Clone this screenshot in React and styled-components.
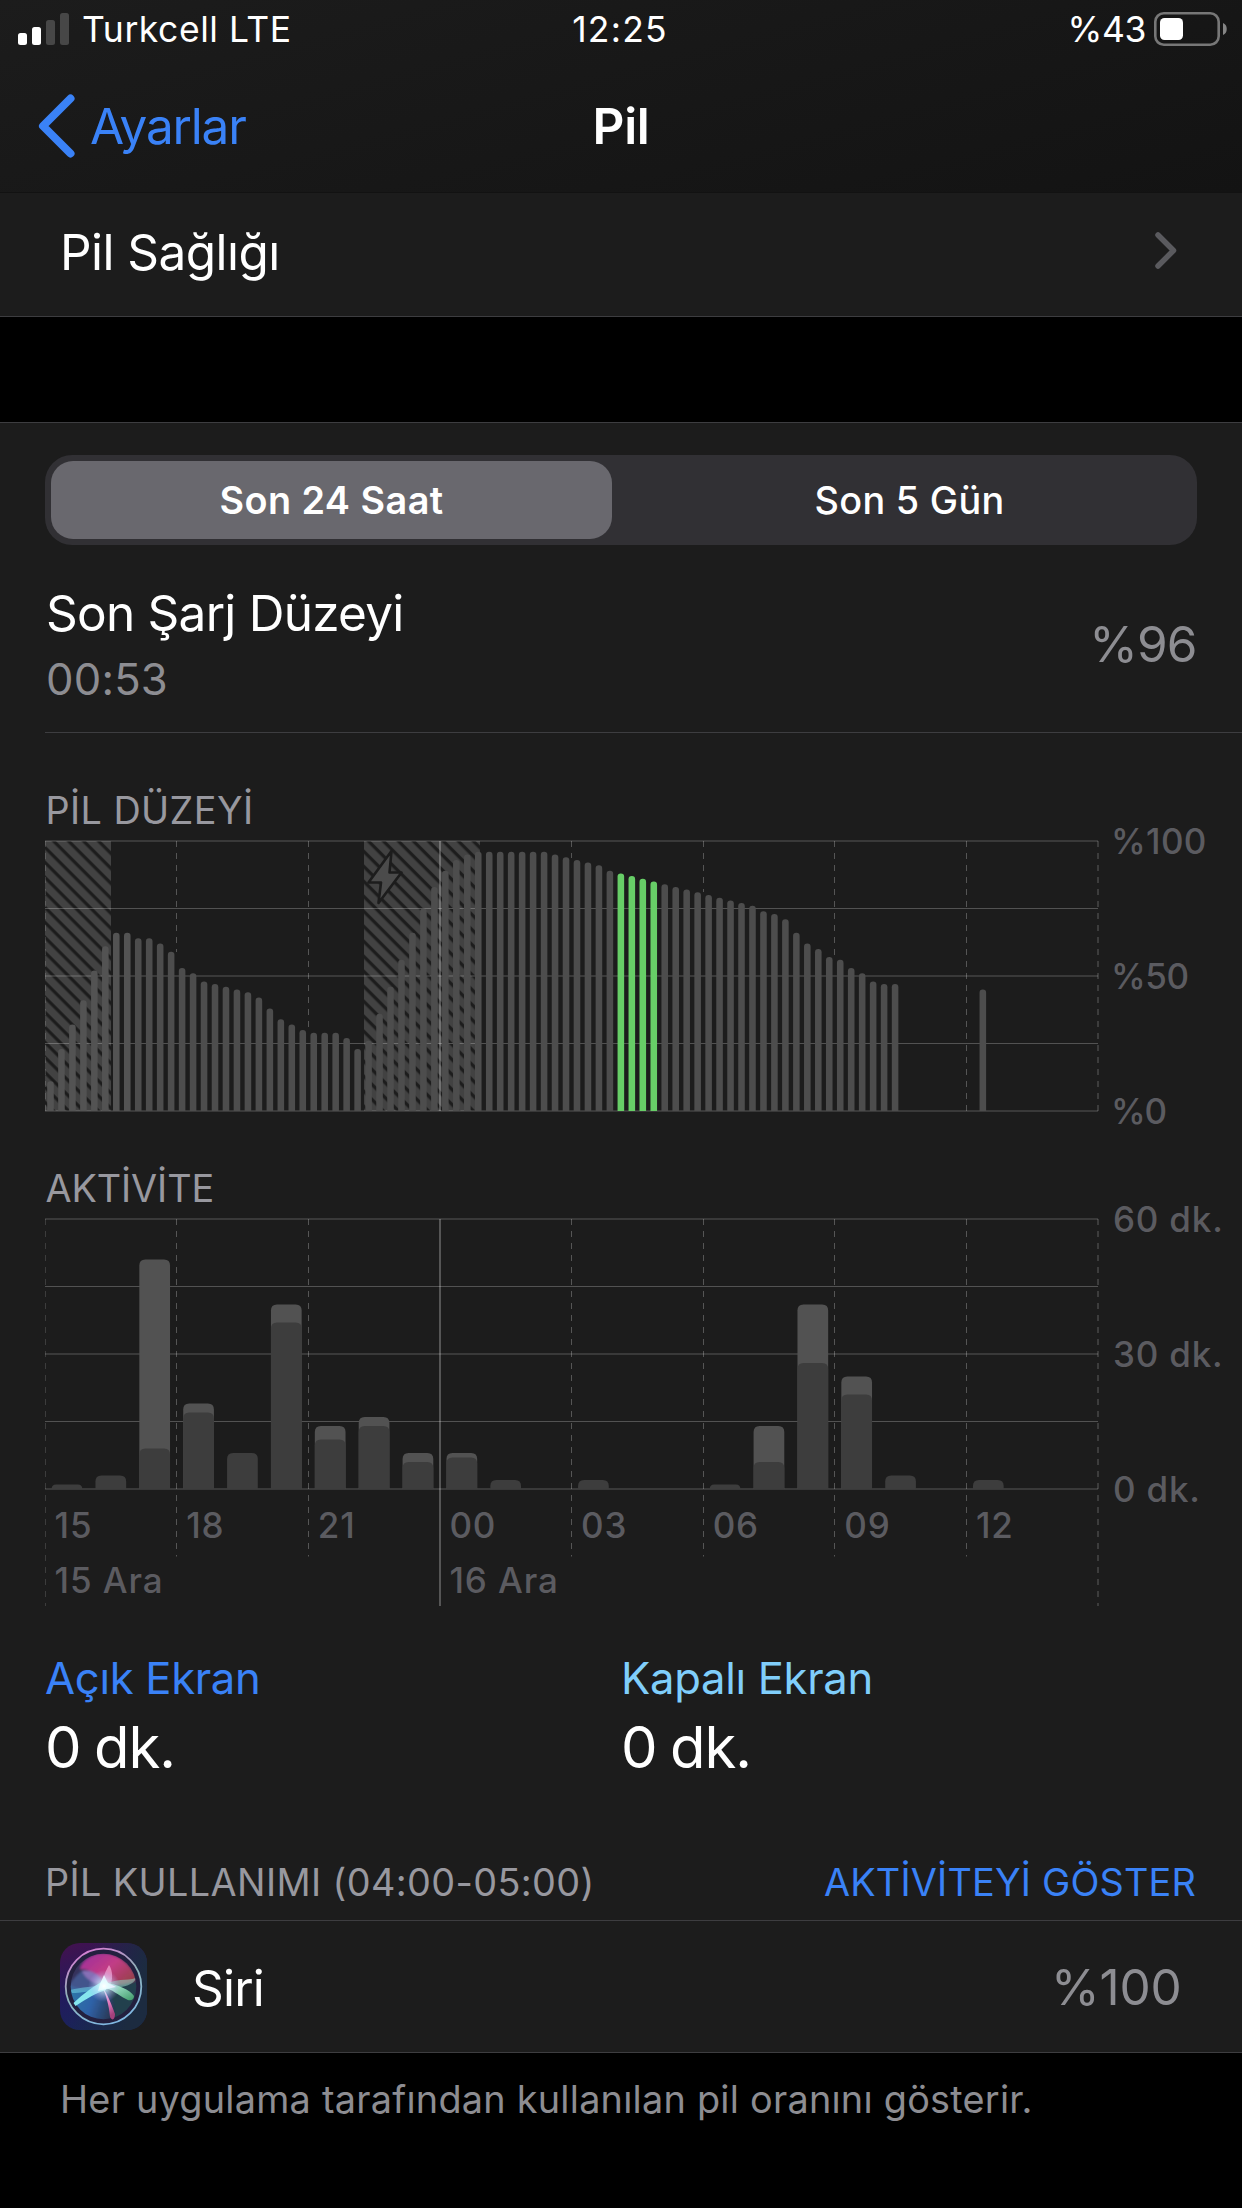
import React, { useState } from 'react'
import styled, { createGlobalStyle } from 'styled-components'

const PLOT_W = 1053
const PLOT_H = 270
const DAY_LINE = 3

const levels = [
    11, 23, 32, 41, 52, 61, 66, 66, 64, 64, 62, 59,
    53, 51, 48, 47, 46, 45, 44, 42, 38, 34, 32, 30,
    29, 29, 29, 27, 23, 26, 36, 46, 56, 66, 75, 83,
    89, 93, 95, 96, 96, 96, 96, 96, 96, 96, 95, 94,
    93, 92, 91, 89, 88, 87, 86, 85, 84, 83, 82, 81,
    80, 79, 78, 77, 76, 74, 73, 71, 66, 62, 60, 57,
    56, 53, 51, 48, 47, 47, 0, 0, 0, 0, 0, 0,
    0, 45, 0, 0, 0, 0, 0, 0, 0, 0, 0, 0,
]

// [total minutes, screen-on minutes] per hour
const activity = [
    [1, 1], [3, 3], [51, 9], [19, 17], [8, 8], [41, 37],
    [14, 11], [16, 14], [8, 6], [8, 7], [2, 2], [0, 0],
    [2, 2], [0, 0], [0, 0], [1, 1], [14, 6], [41, 28],
    [25, 21], [3, 3], [0, 0], [2, 2], [0, 0], [0, 0],
]

const hours = ['15', '18', '21', '00', '03', '06', '09', '12']

const roundedTop = (x, y, w, r) => {
    const k = Math.min(r, PLOT_H - y)
    return `M${x} ${PLOT_H}V${y + k}Q${x} ${y} ${x + k} ${y}H${x + w - k}Q${x + w} ${y} ${x + w} ${y + k}V${PLOT_H}Z`
}

const levelColor = (i) => {
    if (i >= 52 && i <= 55) return '#67ce67'
    return i < 8 ? '#535353' : '#4d4d4d'
}

const HorizontalLines = () => (
    <g>
        {[0, 0.5, 1].map((f) => (
            <rect key={f} x="0" y={PLOT_H * f - 1} width={PLOT_W} height="2" fill="#fff" opacity="0.13" />
        ))}
        {[67, 202].map((y) => (
            <rect key={y} x="0" y={y} width={PLOT_W} height="1" fill="#fff" opacity="0.24" />
        ))}
    </g>
)

const VerticalLines = ({ ends }) => (
    <g>
        {ends.map((end, i) => {
            if (i === DAY_LINE) {
                return <line key={i} x1="395" x2="395" y1="0" y2={end} stroke="#fff" strokeWidth="2" opacity="0.25" />
            }
            const edge = i === 0 || i === 8
            const x = Math.floor((PLOT_W / 8) * i) + (i === 8 ? 0 : 0.5)
            return (
                <line
                    key={i}
                    x1={x}
                    x2={x}
                    y1="0"
                    y2={end}
                    stroke="#fff"
                    strokeWidth={i === 8 ? 2 : 1}
                    strokeDasharray="6 6"
                    opacity={edge ? 0.14 : 0.25}
                />
            )
        })}
    </g>
)

const LevelChart = () => {
    const slot = PLOT_W / levels.length
    const barW = slot * 0.6
    const ends = [270, 111, 186, 270, 17, 51, 114, 270, 270]
    return (
        <Plot viewBox={`0 0 ${PLOT_W} ${PLOT_H}`}>
            <defs>
                <pattern id="stripes" width="10.6" height="10.6" patternUnits="userSpaceOnUse" patternTransform="rotate(45)">
                    <rect width="10.6" height="10.6" fill="#424242" />
                    <rect y="3" width="10.6" height="3.2" fill="#1c1c1c" />
                </pattern>
            </defs>
            <rect x="0" y="0" width="66" height={PLOT_H} fill="url(#stripes)" />
            <rect x="319" y="0" width="116" height={PLOT_H} fill="url(#stripes)" />
            <HorizontalLines />
            <VerticalLines ends={ends} />
            {levels.map((v, i) => v > 0 && (
                <path key={i} d={roundedTop(i * slot + slot * 0.2, PLOT_H - v * 2.7, barW, 3.2)} fill={levelColor(i)} />
            ))}
            <path
                d="M346.5 10L323.5 41.5H336L333.5 62L356.5 31.5H344.5Z"
                fill="#4b4b4b"
                stroke="#1c1c1c"
                strokeWidth="2.6"
                strokeLinejoin="round"
            />
        </Plot>
    )
}

const ActivityChart = () => {
    const slot = PLOT_W / activity.length
    const barW = slot * 0.7
    const ends = [387, 337.5, 337.5, 387, 337.5, 337.5, 337.5, 337.5, 387]
    return (
        <Plot viewBox={`0 0 ${PLOT_W} ${PLOT_H}`}>
            <HorizontalLines />
            <VerticalLines ends={ends} />
            {activity.map(([total, on], i) => total > 0 && (
                <g key={i}>
                    {total > on && <path d={roundedTop(i * slot + slot * 0.15, PLOT_H - total * 4.5, barW, 6)} fill="#525252" />}
                    <path d={roundedTop(i * slot + slot * 0.15, PLOT_H - on * 4.5, barW, 6)} fill="#3d3d3d" />
                </g>
            ))}
        </Plot>
    )
}

const SignalIcon = () => (
    <svg width="51" height="32" viewBox="0 0 51 32">
        <rect x="0" y="20" width="9" height="12" rx="2.5" fill="#fff" />
        <rect x="14" y="14" width="9" height="18" rx="2.5" fill="#fff" />
        <rect x="28" y="7" width="9" height="25" rx="2.5" fill="#474747" />
        <rect x="42" y="0" width="9" height="32" rx="2.5" fill="#474747" />
    </svg>
)

const BatteryIcon = () => (
    <svg width="74" height="34" viewBox="0 0 74 34">
        <rect x="1.3" y="1.3" width="63.4" height="31.4" rx="8.5" fill="none" stroke="#777" strokeWidth="2.6" />
        <rect x="6" y="6" width="23" height="22" rx="4.5" fill="#fff" />
        <path d="M69 11C74 12.5 74 21.5 69 23Z" fill="#858585" />
    </svg>
)

const SiriIcon = () => (
    <svg width="87" height="87" viewBox="0 0 87 87">
        <defs>
            <linearGradient id="siriBg" x1="0.15" y1="0" x2="0.5" y2="1">
                <stop offset="0" stopColor="#41124f" />
                <stop offset="0.5" stopColor="#231a5c" />
                <stop offset="1" stopColor="#17265a" />
            </linearGradient>
            <linearGradient id="siriRight" x1="0.35" y1="0" x2="1" y2="0.2">
                <stop offset="0" stopColor="#1c2b40" stopOpacity="0" />
                <stop offset="1" stopColor="#1c2b40" />
            </linearGradient>
            <linearGradient id="siriRing" x1="0.3" y1="0" x2="0.7" y2="1">
                <stop offset="0" stopColor="#d67fd3" />
                <stop offset="0.45" stopColor="#8fb2b8" />
                <stop offset="1" stopColor="#7fb9e6" />
            </linearGradient>
            <linearGradient id="siriTop" x1="0" y1="0.1" x2="1" y2="0.8">
                <stop offset="0" stopColor="#9c2f9c" />
                <stop offset="0.5" stopColor="#c23c86" />
                <stop offset="1" stopColor="#964048" />
            </linearGradient>
            <linearGradient id="siriLow" x1="0" y1="0.2" x2="1" y2="0.5">
                <stop offset="0" stopColor="#2d7ba8" />
                <stop offset="0.55" stopColor="#2f62a8" />
                <stop offset="1" stopColor="#283752" />
            </linearGradient>
            <linearGradient id="siriGreen" x1="0" y1="0" x2="1" y2="1">
                <stop offset="0" stopColor="#c8fff2" />
                <stop offset="1" stopColor="#3f9a68" />
            </linearGradient>
            <linearGradient id="siriPink" x1="0" y1="0" x2="0.3" y2="1">
                <stop offset="0" stopColor="#f3d9f7" />
                <stop offset="0.6" stopColor="#e37cc0" />
                <stop offset="1" stopColor="#a3417c" />
            </linearGradient>
            <radialGradient id="siriGlow">
                <stop offset="0" stopColor="#fff" />
                <stop offset="0.3" stopColor="#d9fbff" stopOpacity="0.7" />
                <stop offset="1" stopColor="#b9a4ff" stopOpacity="0" />
            </radialGradient>
            <filter id="siriSoft" x="-10%" y="-10%" width="120%" height="120%">
                <feGaussianBlur stdDeviation="1.2" />
            </filter>
            <clipPath id="siriOrb">
                <circle cx="43.5" cy="43.5" r="32.8" />
            </clipPath>
        </defs>
        <rect width="87" height="87" rx="20" fill="url(#siriBg)" />
        <rect width="87" height="87" rx="20" fill="url(#siriRight)" />
        <circle cx="43.5" cy="43.5" r="37.8" fill="#23203f" stroke="url(#siriRing)" strokeWidth="1.8" />
        <g clipPath="url(#siriOrb)">
            <g filter="url(#siriSoft)">
                <rect x="6" y="6" width="75" height="75" fill="#36305c" />
                <path d="M6 40C22 50 34 44 44 42C52 50 60 66 52 82H6Z" fill="url(#siriLow)" />
                <path d="M44 42C58 44 70 40 82 37V82H52C58 66 52 52 44 42Z" fill="#233f4e" />
                <path d="M20 26C26 6 60 2 76 34C78 40 60 42 44 42C40 32 30 26 20 26Z" fill="url(#siriTop)" />
                <path d="M22 28C34 26 42 34 44 42C34 44 20 50 6 46C12 38 16 32 22 28Z" fill="#47629c" opacity="0.75" />
                <path d="M22 28C34 26 42 34 44 42C34 41 25 36 22 28Z" fill="#a47cc8" opacity="0.7" />
            </g>
            <path d="M44 42C42 34 46 28 49 22C53 28 53 36 50 44Z" fill="#ee9ccb" opacity="0.8" />
            <path d="M44 42C56 35 66 38 76 35C74 43 58 46 46 44Z" fill="#8bc9bd" opacity="0.6" />
            <path d="M10 47C22 44 34 44 44 41L42 45C32 48 20 50 12 50Z" fill="#76dcea" opacity="0.5" />
        </g>
        <path d="M44 40C58 41 70 47 74 53C74 58 69 58 66 56C58 52 52 46 44 45Z" fill="url(#siriGreen)" />
        <path d="M42 43C46 49 50 57 55 71C55 77 52 78 50 74C49 62 46 52 42 43Z" fill="url(#siriPink)" />
        <path d="M45 37L46 47C36 50 26 56 15.5 63L13.5 60C24 50 34 43 45 37Z" fill="#86e6ee" />
        <path d="M44 32L48 40L56 44L46 46L38 48L40 41Z" fill="#fff" />
        <circle cx="44" cy="43" r="16" fill="url(#siriGlow)" />
    </svg>
)

const App = () => {
    const [range, setRange] = useState('day')

    return (
        <Screen>
            <GlobalStyle />
            <Header>
                <StatusBar>
                    <StatusSide>
                        <SignalIcon />
                        <StatusText $track="0.55px">Turkcell LTE</StatusText>
                    </StatusSide>
                    <Clock $track="1.2px">12:25</Clock>
                    <StatusSide $end>
                        <StatusText $track="-0.4px">%43</StatusText>
                        <BatteryIcon />
                    </StatusSide>
                </StatusBar>
                <NavBar>
                    <BackButton>
                        <svg width="37" height="64" viewBox="0 0 37 64">
                            <path d="M32.5 4.5L5 32L32.5 59.5" fill="none" stroke="#3a82f7" strokeWidth="8" strokeLinecap="round" strokeLinejoin="round" />
                        </svg>
                        <span>Ayarlar</span>
                    </BackButton>
                    <NavTitle>Pil</NavTitle>
                </NavBar>
            </Header>

            <HealthRow>
                <RowTitle>Pil Sağlığı</RowTitle>
                <svg width="22" height="37" viewBox="0 0 22 37">
                    <path d="M3 3L18.5 18.5L3 34" fill="none" stroke="#5a5a5e" strokeWidth="5.5" strokeLinecap="round" strokeLinejoin="round" />
                </svg>
            </HealthRow>

            <Panel>
                <Segmented>
                    <Segment $active={range === 'day'} onClick={() => setRange('day')}>Son 24 Saat</Segment>
                    <Segment $active={range === 'week'} onClick={() => setRange('week')}>Son 5 Gün</Segment>
                </Segmented>

                <LastCharge>
                    <div>
                        <ChargeTitle>Son Şarj Düzeyi</ChargeTitle>
                        <ChargeTime>00:53</ChargeTime>
                    </div>
                    <Value $lift="5px" $track="-0.9px">%96</Value>
                </LastCharge>

                <ChartTitle $track="0.4px">PİL DÜZEYİ</ChartTitle>
                <ChartRow>
                    <LevelChart />
                    <Axis $gap="13px">
                        <AxisLabel $track="0.3px">%100</AxisLabel>
                        <AxisLabel $track="-0.5px">%50</AxisLabel>
                        <AxisLabel $track="-1.2px">%0</AxisLabel>
                    </Axis>
                </ChartRow>

                <ChartTitle $track="-0.1px">AKTİVİTE</ChartTitle>
                <ChartRow>
                    <ActivityChart />
                    <Axis $gap="15px">
                        <AxisLabel $track="0.8px">60 dk.</AxisLabel>
                        <AxisLabel $track="0.8px">30 dk.</AxisLabel>
                        <AxisLabel $track="0.8px">0 dk.</AxisLabel>
                    </Axis>
                </ChartRow>
                <Ticks>
                    {hours.map((h) => <Tick key={h}>{h}</Tick>)}
                    <Tick $span={3}>15 Ara</Tick>
                    <Tick $span={5}>16 Ara</Tick>
                </Ticks>

                <Stats>
                    <div>
                        <StatLabel $color="#3a82f7">Açık Ekran</StatLabel>
                        <StatValue>0 dk.</StatValue>
                    </div>
                    <div>
                        <StatLabel $color="#80cefb">Kapalı Ekran</StatLabel>
                        <StatValue>0 dk.</StatValue>
                    </div>
                </Stats>

                <UsageHeader>
                    <span>PİL KULLANIMI (04:00-05:00)</span>
                    <ShowActivity>AKTİVİTEYİ GÖSTER</ShowActivity>
                </UsageHeader>
                <AppRow>
                    <SiriIcon />
                    <AppName>Siri</AppName>
                    <Value $lift="0" $track="-0.2px">%100</Value>
                </AppRow>
            </Panel>

            <Footnote>Her uygulama tarafından kullanılan pil oranını gösterir.</Footnote>
        </Screen>
    )
}

const GlobalStyle = createGlobalStyle`
    body {
        margin: 0;
        background: #000;
    }
    * {
        box-sizing: border-box;
    }
    svg {
        display: block;
        flex: none;
    }
`

const Screen = styled.div`
    width: 1242px;
    height: 2208px;
    overflow: hidden;
    background: #000;
    color: #fff;
    font-family: Inter, 'Liberation Sans', sans-serif;
    font-size: 49.5px;
    white-space: nowrap;
`

const Header = styled.header`
    height: 193px;
    background: linear-gradient(165deg, #1c1c1c 0%, #171717 55%, #131313 100%);
    border-bottom: 1px solid #121212;
`

const StatusBar = styled.div`
    display: grid;
    grid-template-columns: 1fr auto 1fr;
    align-items: center;
    height: 58px;
    padding: 0 14px 0 18px;
`

const StatusSide = styled.div`
    display: flex;
    align-items: center;
    justify-content: ${(p) => (p.$end ? 'flex-end' : 'flex-start')};
    gap: ${(p) => (p.$end ? '8px' : '13px')};
`

const StatusText = styled.span`
    padding-top: 2px;
    font-size: 35.5px;
    line-height: 56px;
    letter-spacing: ${(p) => p.$track};
`

const Clock = styled(StatusText)`
    padding-right: 6px;
`

const NavBar = styled.nav`
    display: grid;
    grid-template-columns: 1fr auto 1fr;
    align-items: center;
    height: 134px;
    padding: 2px 38px 0;
`

const BackButton = styled.button`
    display: flex;
    align-items: center;
    gap: 15px;
    padding: 0;
    border: 0;
    background: none;
    color: #3a82f7;
    font: inherit;
    letter-spacing: -1.2px;
`

const NavTitle = styled.h1`
    margin: 0;
    font-size: 49.5px;
    font-weight: 600;
    letter-spacing: -0.3px;
`

const HealthRow = styled.div`
    display: flex;
    align-items: center;
    justify-content: space-between;
    height: 124px;
    padding: 0 65px 8px 60px;
    background: #1c1c1c;
    border-bottom: 1px solid #3d3d40;
`

const RowTitle = styled.span`
    padding-top: 3px;
    letter-spacing: -0.55px;
`

const Panel = styled.main`
    margin-top: 105px;
    padding-left: 45px;
    background: #1c1c1c;
    border-top: 1px solid #3d3d40;
    border-bottom: 1px solid #3d3d40;
`

const Segmented = styled.div`
    display: grid;
    grid-template-columns: 561px 1fr;
    column-gap: 10px;
    width: 1152px;
    height: 90px;
    margin-top: 32px;
    padding: 6px 0 6px 6px;
    border-radius: 27px;
    background: #313034;
`

const Segment = styled.button`
    padding: 0;
    border: 0;
    border-radius: 22px;
    background: ${(p) => (p.$active ? '#69686e' : 'none')};
    color: #fff;
    font: ${(p) => (p.$active ? 600 : 500)} 37.8px/78px Inter, sans-serif;
    letter-spacing: ${(p) => (p.$active ? '0.45px' : '0.3px')};
`

const LastCharge = styled.div`
    display: flex;
    align-items: center;
    justify-content: space-between;
    height: 188px;
    padding: 35px 45px 20px 0;
    border-bottom: 1px solid #3d3d40;
`

const ChargeTitle = styled.div`
    padding-left: 1px;
    line-height: 66px;
    letter-spacing: -0.75px;
`

const ChargeTime = styled.div`
    padding: 1px 0 0 1px;
    font-size: 43.6px;
    line-height: 65px;
    letter-spacing: 0.2px;
    color: #8d8d92;
`

const Value = styled.div`
    margin-left: auto;
    padding: 0 0.5px ${(p) => p.$lift} 0;
    letter-spacing: ${(p) => p.$track};
    color: #8d8d92;
`

const ChartTitle = styled.h2`
    margin: 52px 0 6px;
    padding-left: 0.5px;
    font-size: 37.8px;
    font-weight: 400;
    line-height: 50px;
    letter-spacing: ${(p) => p.$track};
    color: #98989f;
`

const ChartRow = styled.div`
    display: flex;
    height: 270px;
`

const Plot = styled.svg`
    width: 1053px;
    height: 270px;
    overflow: visible;
`

const Axis = styled.div`
    display: flex;
    flex-direction: column;
    justify-content: space-between;
    margin: -18px 0 -18px ${(p) => p.$gap};
    font-size: 35px;
    font-weight: 500;
    line-height: 36px;
    color: #5b5b60;
`

const AxisLabel = styled.span`
    letter-spacing: ${(p) => p.$track};
`

const Ticks = styled.div`
    display: grid;
    grid-template-columns: repeat(8, 1fr);
    width: 1053px;
    padding-top: 9px;
`

const Tick = styled.span`
    grid-column: span ${(p) => p.$span || 1};
    padding-left: 9.5px;
    font-size: 35px;
    font-weight: 500;
    line-height: 55px;
    letter-spacing: 0.9px;
    color: #5b5b60;
`

const Stats = styled.div`
    display: grid;
    grid-template-columns: 576px 1fr;
    margin-top: 36px;
    line-height: 69px;
`

const StatLabel = styled.div`
    font-size: 43.6px;
    letter-spacing: -0.3px;
    color: ${(p) => p.$color};
`

const StatValue = styled.div`
    font-size: 58px;
    letter-spacing: -1px;
    word-spacing: -2px;
`

const UsageHeader = styled.div`
    display: flex;
    justify-content: space-between;
    height: 139px;
    margin-left: -45px;
    padding: 75px 46px 0 45px;
    border-bottom: 1px solid #3d3d40;
    font-size: 37.8px;
    line-height: 50px;
    letter-spacing: 0.38px;
    color: #98989f;
`

const ShowActivity = styled.a`
    color: #3a82f7;
    letter-spacing: 0.2px;
`

const AppRow = styled.div`
    display: flex;
    align-items: center;
    height: 131px;
    padding: 0 60px 0 15px;
`

const AppName = styled.span`
    margin-left: 45px;
    padding-top: 3px;
    letter-spacing: -0.8px;
`

const Footnote = styled.p`
    margin: 21px 0 0;
    padding-left: 60px;
    font-size: 37.8px;
    line-height: 50px;
    letter-spacing: 0.25px;
    color: #8d8d92;
`

export default App
